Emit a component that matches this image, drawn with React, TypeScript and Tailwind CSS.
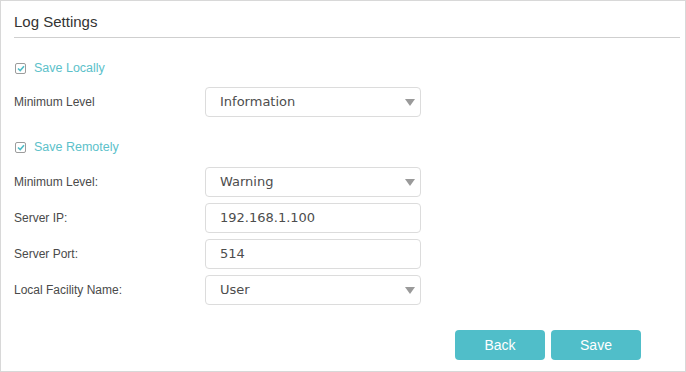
import React from 'react';

const labelCls = 'w-[191px] shrink-0 text-[12px] text-[#4a4a4a]';

const Field: React.FC<{ value: string; select?: boolean }> = ({ value, select }) => (
  <div className="relative flex h-[30px] w-[216px] items-center rounded-[4px] border border-[#dcdcdc] bg-white pl-[14px] text-[13px] text-[#4d4d4d] [font-family:'DejaVu_Sans',Verdana,sans-serif]">
    {value}
    {select && (
      <svg className="absolute right-[5px] top-[11px]" width="10" height="7" viewBox="0 0 10 7">
        <path d="M0 0 H10 L5 7 Z" fill="#9a9a9a" />
      </svg>
    )}
  </div>
);

const Row: React.FC<{ label: string; value: string; select?: boolean; className?: string }> = ({
  label,
  value,
  select,
  className = '',
}) => (
  <div className={`flex items-center ${className}`}>
    <span className={labelCls}>{label}</span>
    <Field value={value} select={select} />
  </div>
);

const Check: React.FC<{ label: string; className?: string }> = ({ label, className = '' }) => (
  <div className={`flex h-[20px] items-center ${className}`}>
    <span className="ml-[1px] flex h-[11px] w-[11px] items-center justify-center rounded-[2px] border border-[#9c9c9c] bg-white">
      <svg width="8" height="7" viewBox="0 0 8 7">
        <path d="M1 3.5 L3.2 5.6 L7 1.2" fill="none" stroke="#4fbdc8" strokeWidth="1.6" />
      </svg>
    </span>
    <span className="ml-[8px] text-[12.5px] text-[#5cc1ca]">{label}</span>
  </div>
);

export default function App() {
  return (
    <div className="h-[372px] w-[686px] border border-[#d8d8d8] bg-white pl-[13px] pr-[5px] [font-family:'Liberation_Sans',Arial,sans-serif]">
      <div className="h-[37px] border-b border-[#cfcfcf] pt-[12px] text-[15px] leading-[18px] text-[#333]">
        Log Settings
      </div>

      <Check label="Save Locally" className="mt-[20px]" />
      <Row label="Minimum Level" value="Information" select className="mt-[9px]" />

      <Check label="Save Remotely" className="mt-[20px]" />
      <Row label="Minimum Level:" value="Warning" select className="mt-[10px]" />
      <Row label="Server IP:" value="192.168.1.100" className="mt-[6px]" />
      <Row label="Server Port:" value="514" className="mt-[6px]" />
      <Row label="Local Facility Name:" value="User" select className="mt-[6px]" />

      <div className="mt-[25px] flex gap-[6px] pl-[441px]">
        <button className="h-[30px] w-[90px] rounded-[4px] bg-[#50bec9] text-[14px] text-white">Back</button>
        <button className="h-[30px] w-[90px] rounded-[4px] bg-[#50bec9] text-[14px] text-white">Save</button>
      </div>
    </div>
  );
}
